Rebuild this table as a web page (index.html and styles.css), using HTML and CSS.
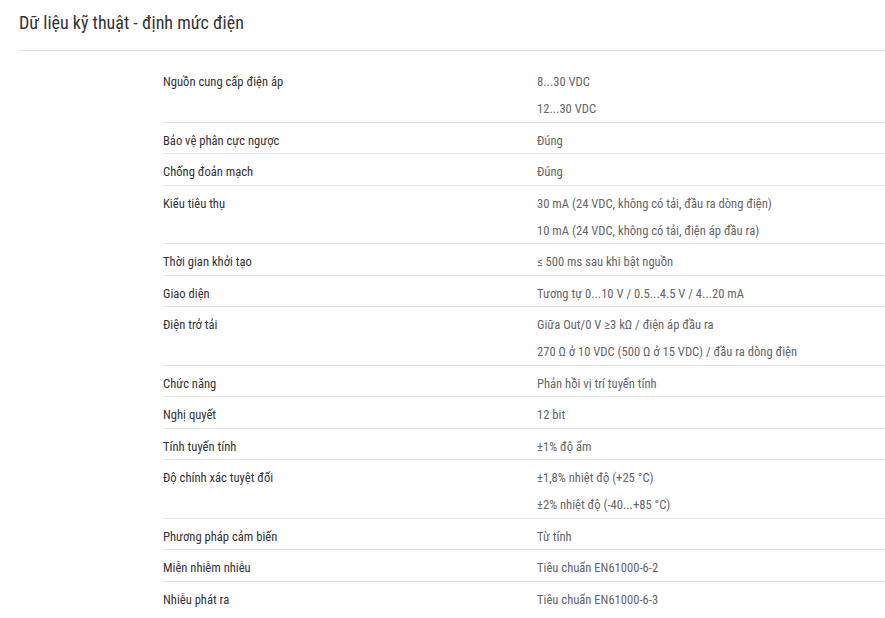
FILE: index.html
```html
<!DOCTYPE html>
<html lang="vi">
<head>
<meta charset="utf-8">
<title>Dữ liệu kỹ thuật</title>
<link rel="stylesheet" href="styles.css">
</head>
<body>
<div class="section">
  <h2 class="title">Dữ liệu kỹ thuật - định mức điện</h2>
  <div class="specs">
    <div class="row"><div class="label">Nguồn cung cấp điện áp</div><div class="values"><div class="v">8...30 VDC</div><div class="v">12...30 VDC</div></div></div>
    <div class="row"><div class="label">Bảo vệ phân cực ngược</div><div class="values"><div class="v">Đúng</div></div></div>
    <div class="row"><div class="label">Chống đoản mạch</div><div class="values"><div class="v">Đúng</div></div></div>
    <div class="row"><div class="label">Kiểu tiêu thụ</div><div class="values"><div class="v">30 mA (24 VDC, không có tải, đầu ra dòng điện)</div><div class="v">10 mA (24 VDC, không có tải, điện áp đầu ra)</div></div></div>
    <div class="row"><div class="label">Thời gian khởi tạo</div><div class="values"><div class="v">≤ 500 ms sau khi bật nguồn</div></div></div>
    <div class="row"><div class="label">Giao diện</div><div class="values"><div class="v">Tương tự 0...10 V / 0.5...4.5 V / 4...20 mA</div></div></div>
    <div class="row"><div class="label">Điện trở tải</div><div class="values"><div class="v">Giữa Out/0 V ≥3 kΩ / điện áp đầu ra</div><div class="v">270 Ω ở 10 VDC (500 Ω ở 15 VDC) / đầu ra dòng điện</div></div></div>
    <div class="row"><div class="label">Chức năng</div><div class="values"><div class="v">Phản hồi vị trí tuyến tính</div></div></div>
    <div class="row"><div class="label">Nghị quyết</div><div class="values"><div class="v">12 bit</div></div></div>
    <div class="row"><div class="label">Tính tuyến tính</div><div class="values"><div class="v">±1% độ ẩm</div></div></div>
    <div class="row"><div class="label">Độ chính xác tuyệt đối</div><div class="values"><div class="v">±1,8% nhiệt độ (+25 °C)</div><div class="v">±2% nhiệt độ (-40...+85 °C)</div></div></div>
    <div class="row"><div class="label">Phương pháp cảm biến</div><div class="values"><div class="v">Từ tính</div></div></div>
    <div class="row"><div class="label">Miễn nhiễm nhiễu</div><div class="values"><div class="v">Tiêu chuẩn EN61000-6-2</div></div></div>
    <div class="row"><div class="label">Nhiễu phát ra</div><div class="values"><div class="v">Tiêu chuẩn EN61000-6-3</div></div></div>
  </div>
</div>
</body>
</html>
```
FILE: styles.css
```css
html, body {
  margin: 0;
  padding: 0;
  background: #fff;
}
body {
  font-family: "Roboto Condensed", Roboto, "Noto Sans", sans-serif;
  font-stretch: 87.5%;
  color: #333;
}
.section {
  padding-left: 19px;
}
.title {
  margin: 0;
  font-size: 18px;
  font-weight: 400;
  line-height: 24px;
  padding-top: 11px;
  padding-bottom: 15px;
  border-bottom: 1px solid #e3e3e3;
  color: #333;
}
.specs {
  margin-left: 144px;
  margin-top: 13px;
}
.row {
  display: flex;
  padding: 8px 0 2.5px;
  font-size: 12.6px;
  line-height: 20px;
}
.row + .row {
  border-top: 1px solid #e3e3e3;
}
.label {
  width: 374px;
  flex: none;
  color: #333;
}
.values {
  color: #666;
}
.v + .v {
  margin-top: 7px;
}
```
